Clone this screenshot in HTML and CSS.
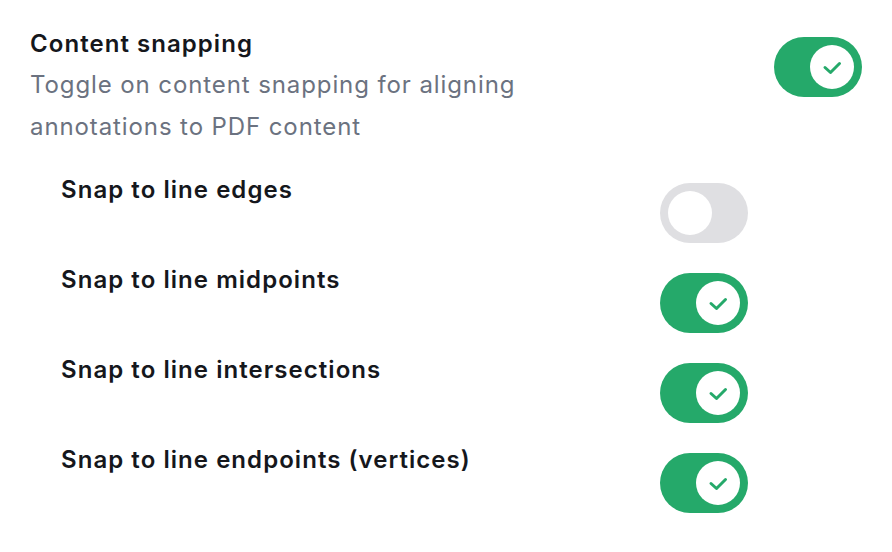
FILE: index.html
```html
<!DOCTYPE html>
<html lang="en">
<head>
<meta charset="utf-8">
<title>Content snapping</title>
<link rel="stylesheet" href="styles.css">
</head>
<body>
<div class="panel">
  <p class="clip">annotations to elements</p>
  <div class="setting">
    <div class="setting-text">
      <div class="title">Content snapping</div>
      <div class="desc">Toggle on content snapping for aligning<br>annotations to PDF content</div>
    </div>
    <div class="toggle on main-toggle">
      <span class="knob"><svg viewBox="0 0 44 44" width="44" height="44"><path d="M15 22.5 L20.5 27.5 L29.5 18.5" fill="none" stroke="#25a96a" stroke-width="3" stroke-linecap="round" stroke-linejoin="round"/></svg></span>
    </div>
  </div>
  <div class="sub-list">
    <div class="sub-row">
      <div class="label">Snap to line edges</div>
      <div class="toggle off"><span class="knob"></span></div>
    </div>
    <div class="sub-row">
      <div class="label">Snap to line midpoints</div>
      <div class="toggle on">
        <span class="knob"><svg viewBox="0 0 44 44" width="44" height="44"><path d="M15 22.5 L20.5 27.5 L29.5 18.5" fill="none" stroke="#25a96a" stroke-width="3" stroke-linecap="round" stroke-linejoin="round"/></svg></span>
      </div>
    </div>
    <div class="sub-row">
      <div class="label">Snap to line intersections</div>
      <div class="toggle on">
        <span class="knob"><svg viewBox="0 0 44 44" width="44" height="44"><path d="M15 22.5 L20.5 27.5 L29.5 18.5" fill="none" stroke="#25a96a" stroke-width="3" stroke-linecap="round" stroke-linejoin="round"/></svg></span>
      </div>
    </div>
    <div class="sub-row">
      <div class="label">Snap to line endpoints (vertices)</div>
      <div class="toggle on">
        <span class="knob"><svg viewBox="0 0 44 44" width="44" height="44"><path d="M15 22.5 L20.5 27.5 L29.5 18.5" fill="none" stroke="#25a96a" stroke-width="3" stroke-linecap="round" stroke-linejoin="round"/></svg></span>
      </div>
    </div>
  </div>
</div>
</body>
</html>
```

FILE: styles.css
```css
html, body {
  margin: 0;
  padding: 0;
  background: #ffffff;
  overflow: hidden;
}

body {
  font-family: Inter, "Noto Sans", sans-serif;
  width: 892px;
  height: 552px;
}

.panel {
  padding: 0 30px 0 30px;
}

.clip {
  margin: -31px 0 0 0;
  font-size: 24px;
  line-height: 42px;
  letter-spacing: 0.9px;
  color: #6b7280;
}

.setting {
  display: flex;
  justify-content: space-between;
  align-items: flex-start;
  margin-top: 19px;
}

.title {
  font-size: 24px;
  line-height: 28px;
  font-weight: 600;
  letter-spacing: 1.05px;
  color: #15171c;
}

.desc {
  margin-top: 6px;
  font-size: 24px;
  line-height: 42px;
  letter-spacing: 0.9px;
  color: #6b7280;
}

.toggle {
  box-sizing: border-box;
  width: 88px;
  height: 60px;
  border-radius: 30px;
  padding: 8px;
  display: flex;
  flex-shrink: 0;
}

.toggle.on {
  background: #25a96a;
  justify-content: flex-end;
}

.toggle.off {
  background: #dfdfe2;
  justify-content: flex-start;
}

.knob {
  width: 44px;
  height: 44px;
  border-radius: 50%;
  background: #ffffff;
  display: block;
}

.knob svg {
  display: block;
}

.main-toggle {
  margin-top: 7px;
}

.sub-list {
  margin: 28px 114px 0 31px;
  display: flex;
  flex-direction: column;
  gap: 23px;
}

.sub-row {
  display: flex;
  justify-content: space-between;
  align-items: flex-start;
}

.label {
  font-size: 24px;
  line-height: 28px;
  font-weight: 600;
  letter-spacing: 1.05px;
  color: #15171c;
}

.sub-row .toggle {
  margin-top: 7px;
}
```
